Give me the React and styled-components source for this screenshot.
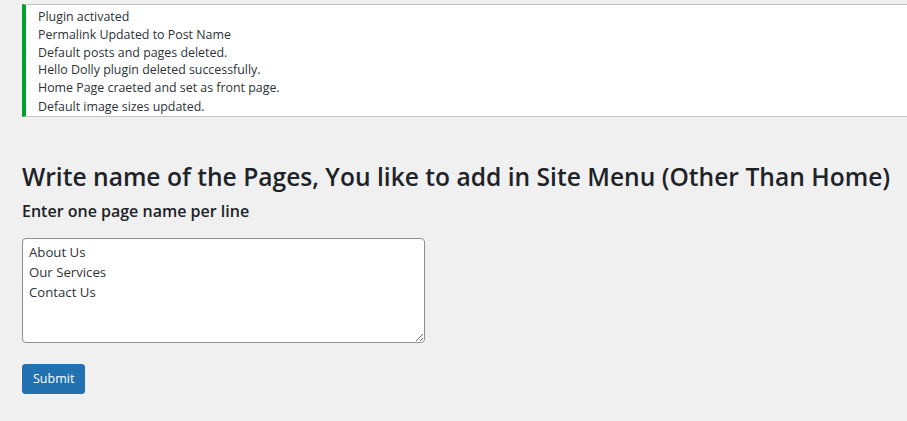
import React from "react";
import styled, { createGlobalStyle } from "styled-components";

const Global = createGlobalStyle`
  html, body { margin: 0; padding: 0; background: #f0f0f1; overflow-x: hidden; }
  body { font-family: "Open Sans", "Noto Sans", sans-serif; color: #1d2327; }
`;

const Wrap = styled.div`
  padding: 4px 0 0 22px;
`;

const Notice = styled.div`
  background: #fff;
  border: 1px solid #c3c4c7;
  border-left: 4px solid #00a32a;
  margin-right: -20px;
  padding: 3px 12px 0 12px;
  font-size: 12.4px;
  line-height: 17.8px;
  color: #2c3338;
`;

const NoticeLine = styled.div`
  margin-top: ${(p) => (p.$last ? "1px" : "0")};
`;

const Heading = styled.h1`
  margin: 45px 0 0 0;
  font-size: 24.6px;
  font-weight: 600;
  line-height: 30px;
  white-space: nowrap;
`;

const SubHeading = styled.h2`
  margin: 8px 0 0 0;
  font-size: 16px;
  font-weight: 600;
  line-height: 22px;
`;

const TextArea = styled.textarea`
  display: block;
  box-sizing: border-box;
  margin-top: 16px;
  width: 403px;
  height: 105px;
  border: 1px solid #8c8f94;
  border-radius: 4px;
  padding: 3px 6px;
  font-family: "Open Sans", "Noto Sans", sans-serif;
  font-size: 13.2px;
  line-height: 20px;
  color: #2c3338;
  background: #fff;
  resize: both;
  outline: none;
`;

const Button = styled.button`
  margin-top: 21px;
  height: 30px;
  padding: 0 10px;
  background: #2271b1;
  border: 1px solid #2271b1;
  border-radius: 3px;
  color: #fff;
  font-family: "Open Sans", "Noto Sans", sans-serif;
  font-size: 12.5px;
  line-height: 28px;
  cursor: pointer;
`;

const messages = [
  "Plugin activated",
  "Permalink Updated to Post Name",
  "Default posts and pages deleted.",
  "Hello Dolly plugin deleted successfully.",
  "Home Page craeted and set as front page.",
  "Default image sizes updated.",
];

export default function App() {
  return (
    <>
      <Global />
      <Wrap>
        <Notice>
          {messages.map((m, i) => (
            <NoticeLine key={i} $last={i === messages.length - 1}>
              {m}
            </NoticeLine>
          ))}
        </Notice>
        <Heading>Write name of the Pages, You like to add in Site Menu (Other Than Home)</Heading>
        <SubHeading>Enter one page name per line</SubHeading>
        <TextArea defaultValue={"About Us\nOur Services\nContact Us"} />
        <Button>Submit</Button>
      </Wrap>
    </>
  );
}
